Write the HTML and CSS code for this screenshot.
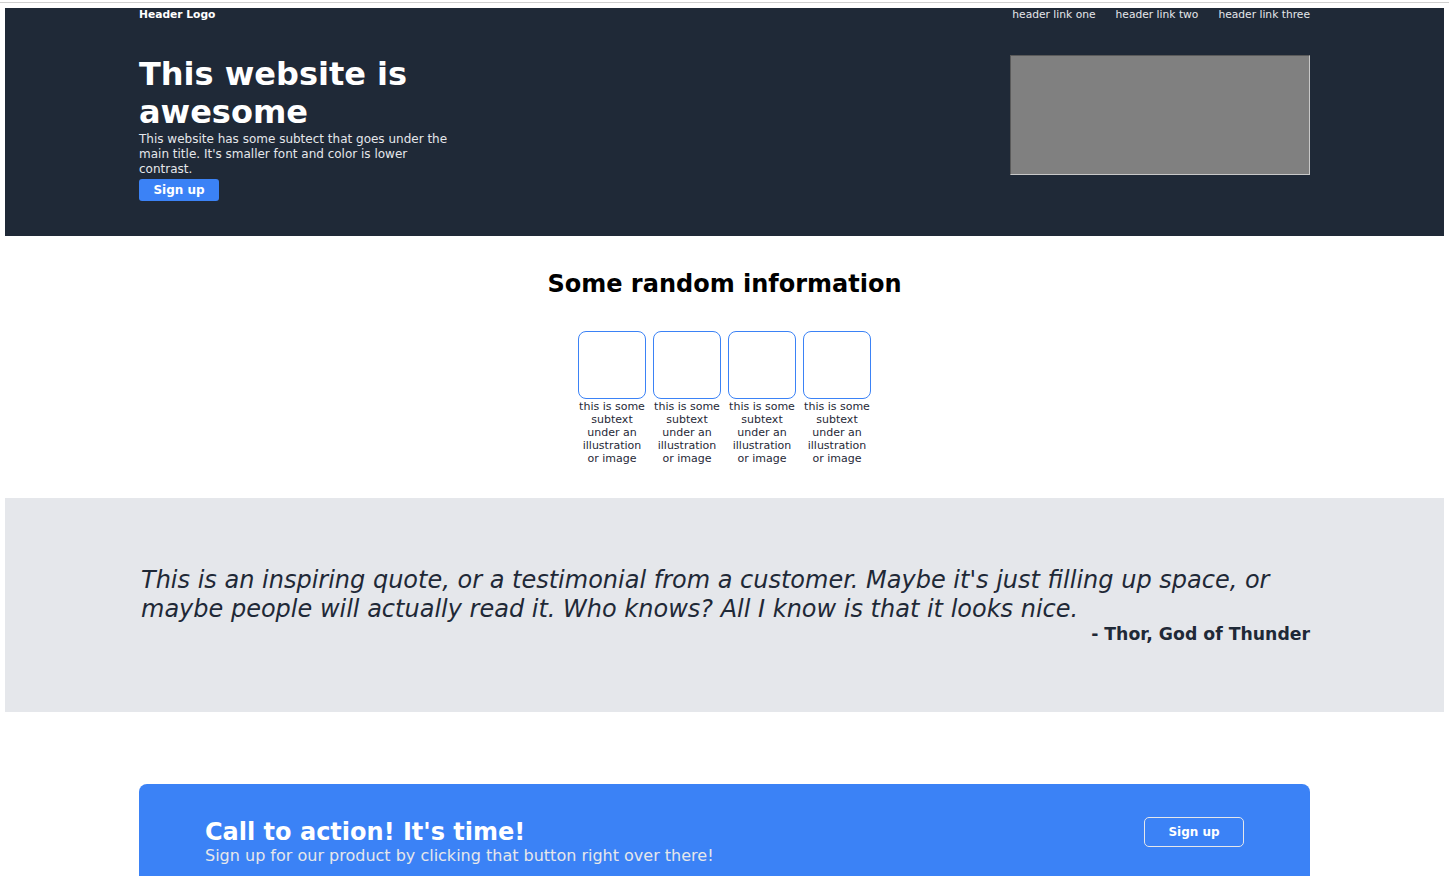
FILE: index.html
```html
<!DOCTYPE html>
<html lang="en">
<head>
<meta charset="utf-8">
<title>Landing page</title>
<link rel="stylesheet" href="styles.css">
</head>
<body>
<div class="topline"></div>
<div class="page">
  <header class="hero">
    <div class="container">
      <nav class="nav">
        <div class="logo">Header Logo</div>
        <ul class="links">
          <li><a href="#">header link one</a></li>
          <li><a href="#">header link two</a></li>
          <li><a href="#">header link three</a></li>
        </ul>
      </nav>
      <div class="hero-main">
        <div class="hero-text">
          <h1>This website is awesome</h1>
          <p>This website has some subtect that goes under the main title. It's smaller font and color is lower contrast.</p>
          <button class="btn">Sign up</button>
        </div>
        <div class="hero-image"></div>
      </div>
    </div>
  </header>

  <section class="info">
    <h2>Some random information</h2>
    <div class="cards">
      <div class="card"><div class="card-img"></div><p>this is some subtext under an illustration or image</p></div>
      <div class="card"><div class="card-img"></div><p>this is some subtext under an illustration or image</p></div>
      <div class="card"><div class="card-img"></div><p>this is some subtext under an illustration or image</p></div>
      <div class="card"><div class="card-img"></div><p>this is some subtext under an illustration or image</p></div>
    </div>
  </section>

  <section class="quote">
    <div class="container">
      <p class="quote-text">This is an inspiring quote, or a testimonial from a customer. Maybe it's just filling up space, or maybe people will actually read it. Who knows? All I know is that it looks nice.</p>
      <p class="quote-author">- Thor, God of Thunder</p>
    </div>
  </section>

  <section class="cta-wrap">
    <div class="container cta">
      <div class="cta-text">
        <h3>Call to action! It's time!</h3>
        <p>Sign up for our product by clicking that button right over there!</p>
      </div>
      <button class="btn-outline">Sign up</button>
    </div>
  </section>
</div>
</body>
</html>
```

FILE: styles.css
```css
* { box-sizing: border-box; }

html, body {
  margin: 0;
  padding: 0;
  background: #ffffff;
  font-family: "DejaVu Sans", sans-serif;
}

.topline {
  height: 1px;
  margin-top: 2px;
  background: #cfcfcf;
}

.page {
  padding: 5px 5px 0 5px;
}

.container {
  width: 1171px;
  margin: 0 auto;
}

/* header / hero */
.hero {
  background: #1f2937;
  padding-bottom: 35px;
}

.nav {
  display: flex;
  justify-content: space-between;
  align-items: flex-start;
  height: 13px;
  font-size: 10.7px;
  line-height: 13px;
}

.logo {
  color: #ffffff;
  font-weight: bold;
}

.links {
  display: flex;
  gap: 20px;
  list-style: none;
  margin: 0;
  padding: 0;
}

.links a {
  color: #e5e7eb;
  text-decoration: none;
}

.hero-main {
  display: flex;
  justify-content: space-between;
  align-items: flex-start;
  margin-top: 34px;
}

.hero-text {
  width: 320px;
}

.hero-text h1 {
  margin: 0;
  font-size: 32px;
  line-height: 38px;
  color: #ffffff;
  font-weight: bold;
}

.hero-text p {
  margin: 1px 0 0 0;
  font-size: 12px;
  line-height: 15px;
  color: #e5e7eb;
}

.btn {
  margin-top: 2px;
  display: block;
  width: 80px;
  height: 22px;
  border: none;
  border-radius: 3px;
  background: #3b82f6;
  color: #ffffff;
  font-family: "DejaVu Sans", sans-serif;
  font-weight: bold;
  font-size: 12px;
  padding: 0;
}

.hero-image {
  width: 300px;
  height: 120px;
  background: #808080;
  border-top: 1px solid #5a5a5a;
  border-left: 1px solid #5a5a5a;
  border-right: 1px solid #c8c8c8;
  border-bottom: 1px solid #c8c8c8;
}

/* info */
.info {
  padding: 34px 0 33px;
  text-align: center;
}

.info h2 {
  margin: 0 0 33px 0;
  font-size: 24px;
  line-height: 28px;
  color: #000000;
}

.cards {
  display: flex;
  justify-content: center;
  gap: 7px;
}

.card {
  width: 68px;
}

.card-img {
  width: 68px;
  height: 68px;
  border: 1px solid #3b82f6;
  border-radius: 8px;
}

.card p {
  margin: 1px 0 0;
  font-size: 11px;
  line-height: 13px;
  color: #1f2937;
}

/* quote */
.quote {
  background: #e5e7eb;
  padding: 68px 0 68px;
}

.quote-text {
  margin: 0;
  font-size: 24px;
  line-height: 29px;
  font-style: italic;
  color: #1f2937;
  padding-left: 2px;
}

.quote-author {
  margin: 0;
  text-align: right;
  font-weight: bold;
  font-size: 17.3px;
  line-height: 20px;
  color: #1f2937;
}

/* cta */
.cta-wrap {
  padding-top: 72px;
}

.cta {
  background: #3b82f6;
  border-radius: 8px;
  padding: 33px 66px 40px;
  display: flex;
  justify-content: space-between;
  align-items: flex-start;
}

.cta-text h3 {
  margin: 1px 0 0;
  font-size: 24px;
  line-height: 28px;
  color: #ffffff;
}

.cta-text p {
  margin: 0;
  font-size: 16px;
  line-height: 19px;
  color: #e5e7eb;
}

.btn-outline {
  width: 100px;
  height: 30px;
  background: transparent;
  border: 1px solid #e5e7eb;
  border-radius: 5px;
  color: #ffffff;
  font-family: "DejaVu Sans", sans-serif;
  font-weight: bold;
  font-size: 12px;
  padding: 0;
}
```
